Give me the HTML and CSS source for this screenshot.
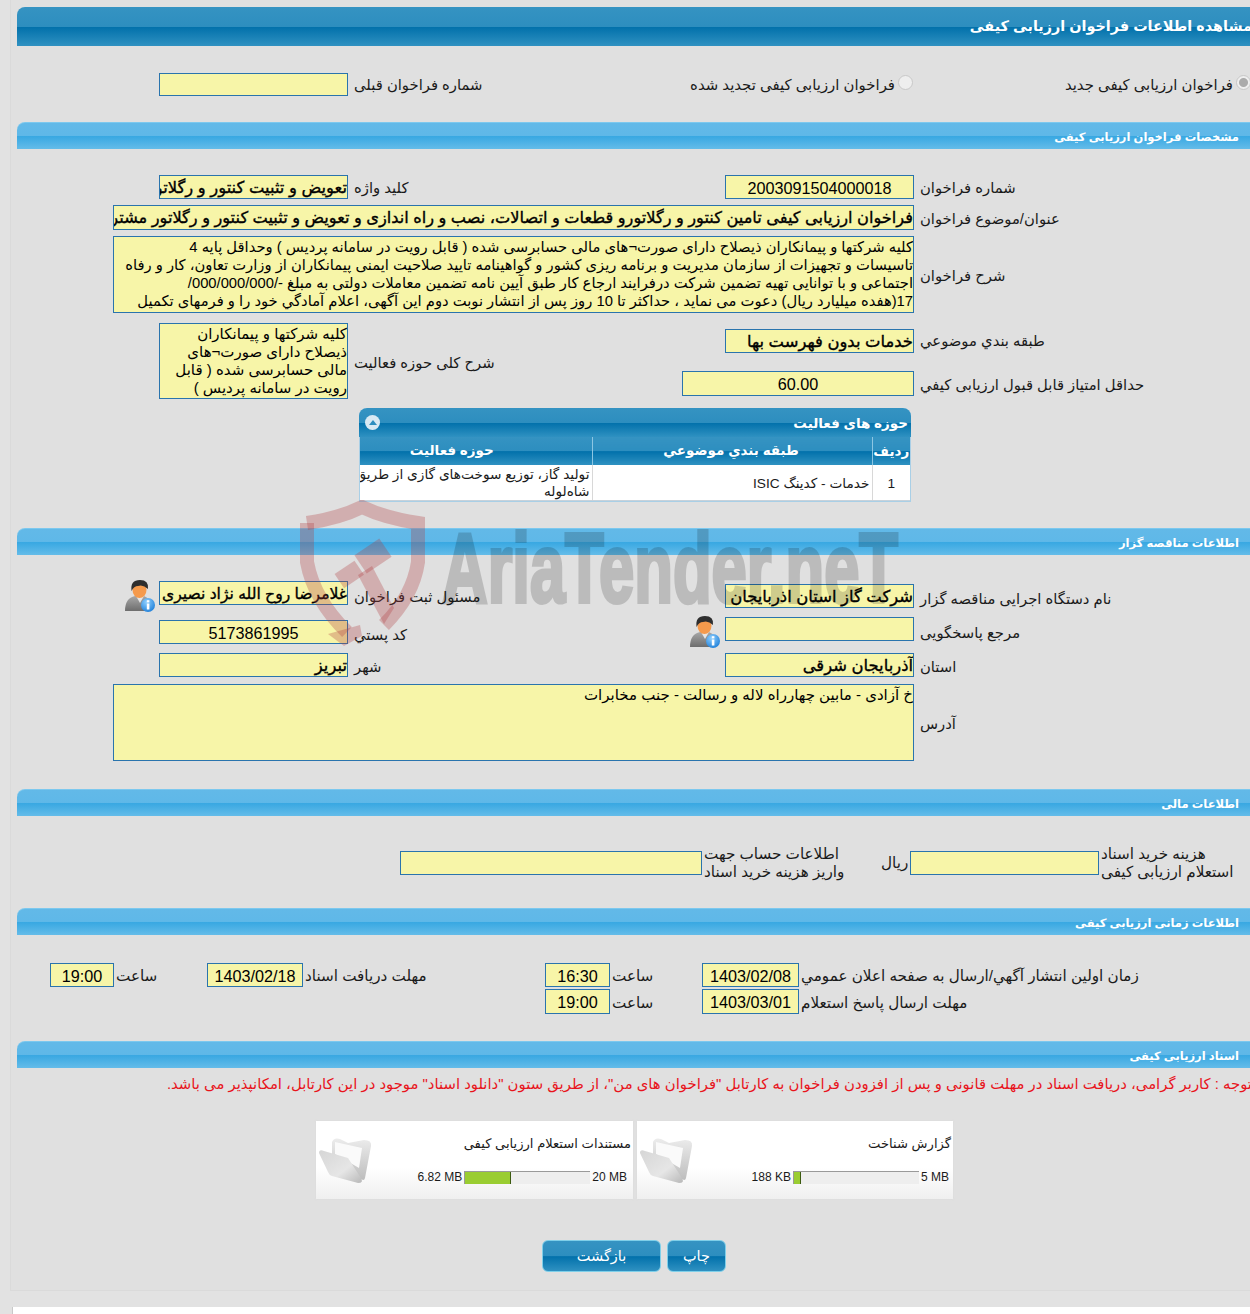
FILE: index.html
```html
<!DOCTYPE html>
<html lang="fa">
<head>
<meta charset="utf-8">
<title>مشاهده اطلاعات فراخوان ارزیابی کیفی</title>
<link rel="stylesheet" href="styles.css">
</head>
<body>
<div class="panel">
<main class="page">
  <h1 class="title-bar">مشاهده اطلاعات فراخوان ارزیابی کیفی</h1>

  <div class="radio-row">
    <div class="val prev-input"></div>
    <div class="lab prev-label">شماره فراخوان قبلی</div>
    <label class="opt opt-second"><span class="radio"></span>فراخوان ارزیابی کیفی تجدید شده</label>
    <label class="opt opt-first"><span class="radio radio-on"></span>فراخوان ارزیابی کیفی جدید</label>
  </div>

  <h2 class="bar bar-spec">مشخصات فراخوان ارزیابی کیفی</h2>
  <div class="form form-spec">
    <div class="val c-lv strong">تعویض و تثبیت کنتور و رگلاتور</div>
    <div class="lab c-ll">کلید واژه</div>
    <div class="val c-rv num">2003091504000018</div>
    <div class="lab c-rl">شماره فراخوان</div>

    <div class="val c-wide strong subject">فراخوان ارزیابی کیفی تامین کنتور و رگلاتورو قطعات و اتصالات، نصب و راه اندازی و تعویض و تثبیت کنتور و رگلاتور مشترکین</div>
    <div class="lab c-rl">عنوان/موضوع فراخوان</div>

    <div class="val c-wide multi multi-main">کلیه شرکتها و پیمانکاران ذیصلاح دارای صورت¬های مالی حسابرسی شده ( قابل رویت در سامانه پردیس ) وحداقل پایه 4<br>تاسیسات و تجهیزات از سازمان مدیریت و برنامه ریزی کشور و گواهینامه تایید صلاحیت ایمنی پیمانکاران از وزارت تعاون، کار و رفاه<br>اجتماعی و با توانایی تهیه تضمین شرکت درفرایند ارجاع کار طبق آیین نامه تضمین معاملات دولتی به مبلغ -/000/000/000/<br>17(هفده میلیارد ریال) دعوت می نماید ، حداکثر تا 10 روز پس از انتشار نوبت دوم این آگهی، اعلام آمادگي خود را و فرمهای تکمیل</div>
    <div class="lab c-rl">شرح فراخوان</div>

    <div class="val c-lv multi scope-box">کلیه شرکتها و پیمانکاران<br>ذیصلاح دارای صورت¬های<br>مالی حسابرسی شده ( قابل<br>رویت در سامانه پردیس )</div>
    <div class="lab c-ll scope-label">شرح کلی حوزه فعالیت</div>
    <div class="val c-rv strong class-box">خدمات بدون فهرست بها</div>
    <div class="lab c-rl class-label">طبقه بندي موضوعي</div>

    <div class="val c-score num">60.00</div>
    <div class="lab c-rl">حداقل امتیاز قابل قبول ارزیابی کیفي</div>
  </div>

  <section class="activity">
    <div class="activity-head">
      <span class="toggle"><span class="toggle-arrow"></span></span>
      <span class="activity-title">حوزه های فعالیت</span>
    </div>
    <table class="activity-table">
      <thead>
        <tr><th class="col-a">ردیف</th><th class="col-b">طبقه بندي موضوعي</th><th class="col-c">حوزه فعالیت</th></tr>
      </thead>
      <tbody>
        <tr><td class="cell-n">1</td><td>خدمات - کدینگ ISIC</td><td class="cell-c">تولید گاز، توزیع سوخت‌های گازی از طریق<br>شاه‌لوله</td></tr>
      </tbody>
    </table>
  </section>

  <h2 class="bar bar-org">اطلاعات مناقصه گزار</h2>
  <div class="form form-org">
    <svg class="person c-li" viewBox="0 0 32 32"><use href="#person-icon"/></svg>
    <div class="val c-lv strong name-fit">غلامرضا روح الله نژاد نصیری</div>
    <div class="lab c-ll">مسئول ثبت فراخوان</div>
    <div class="val c-rv strong org-r">شرکت گاز استان اذربایجان</div>
    <div class="lab c-rl org-r-label">نام دستگاه اجرایی مناقصه گزار</div>

    <div class="val c-lv num org-l">5173861995</div>
    <div class="lab c-ll org-l-label">کد پستي</div>
    <svg class="person c-ri" viewBox="0 0 32 32"><use href="#person-icon"/></svg>
    <div class="val c-rv"></div>
    <div class="lab c-rl">مرجع پاسخگویی</div>

    <div class="val c-lv strong">تبریز</div>
    <div class="lab c-ll">شهر</div>
    <div class="val c-rv strong">آذربایجان شرقی</div>
    <div class="lab c-rl">استان</div>

    <div class="val c-wide multi">خ آزادی - مابین چهارراه لاله و رسالت - جنب مخابرات</div>
    <div class="lab c-rl">آدرس</div>
  </div>

  <h2 class="bar bar-fin">اطلاعات مالی</h2>
  <div class="fin-row">
    <div class="val fin-account"></div>
    <div class="lab fin-account-label">اطلاعات حساب جهت<br>واریز هزینه خرید اسناد</div>
    <div class="lab fin-unit">ریال</div>
    <div class="val fin-cost"></div>
    <div class="lab fin-cost-label">هزینه خرید اسناد<br>استعلام ارزیابی کیفی</div>
  </div>

  <h2 class="bar bar-time">اطلاعات زمانی ارزیابی کیفی</h2>
  <div class="time-grid">
    <div class="val num t1">19:00</div>
    <div class="lab t-l t1l">ساعت</div>
    <div class="val num t2">1403/02/18</div>
    <div class="lab t-l t2l">مهلت دریافت اسناد</div>
    <div class="val num t3">16:30</div>
    <div class="lab t-l t3l">ساعت</div>
    <div class="val num t4">1403/02/08</div>
    <div class="lab t-l t4l">زمان اولین انتشار آگهي/ارسال به صفحه اعلان عمومي</div>
    <div class="val num t3 r2">19:00</div>
    <div class="lab t-l t3l r2">ساعت</div>
    <div class="val num t4 r2">1403/03/01</div>
    <div class="lab t-l t4l r2">مهلت ارسال پاسخ استعلام</div>
  </div>

  <h2 class="bar bar-docs">اسناد ارزیابی کیفی</h2>
  <p class="notice">توجه : کاربر گرامی، دریافت اسناد در مهلت قانونی و پس از افزودن فراخوان به کارتابل "فراخوان های من"، از طریق ستون "دانلود اسناد" موجود در این کارتابل، امکانپذیر می باشد.</p>

  <div class="cards">
    <article class="card">
      <svg class="folder" viewBox="0 0 56 50"><use href="#folder-icon"/></svg>
      <div class="card-main">
        <div class="card-title">مستندات استعلام ارزیابی کیفی</div>
        <div class="meter">
          <span class="meter-text">6.82 MB</span>
          <span class="meter-track"><span class="meter-fill" style="width:36%"></span></span>
          <span class="meter-text">20 MB</span>
        </div>
      </div>
    </article>
    <article class="card">
      <svg class="folder" viewBox="0 0 56 50"><use href="#folder-icon"/></svg>
      <div class="card-main">
        <div class="card-title">گزارش شناخت</div>
        <div class="meter">
          <span class="meter-text">188 KB</span>
          <span class="meter-track"><span class="meter-fill" style="width:5%"></span></span>
          <span class="meter-text">5 MB</span>
        </div>
      </div>
    </article>
  </div>

  <div class="actions">
    <button class="btn btn-back" type="button">بازگشت</button>
    <button class="btn btn-print" type="button">چاپ</button>
  </div>
</main>
</div>
<div class="foot-strip"></div>

<svg class="watermark" viewBox="0 0 610 150" aria-hidden="true">
  <g fill="none" stroke="#b03a3f" stroke-opacity=".3" stroke-width="14">
    <path d="M7 23 Q40 18 62 7 Q85 18 118 23 L118 62 Q113 96 84 125"/>
    <path d="M7 23 L7 62 Q14 100 47 132"/>
  </g>
  <g fill="#b03a3f" fill-opacity=".3">
    <rect x="37" y="66" width="24" height="17" transform="rotate(-34 49 74)"/>
    <rect x="58" y="45" width="30" height="22" transform="rotate(-34 73 56)"/>
    <path d="M58 75 L72 66 L94 108 L84 124 Z"/>
    <path d="M28 134 L60 125 L62 136 L44 146 Z"/>
  </g>
  <text class="wm-text" x="142" y="102" textLength="456" lengthAdjust="spacingAndGlyphs">AriaTender.neT</text>
</svg>

<svg class="defs" width="0" height="0" aria-hidden="true">
  <defs>
    <linearGradient id="fold-back" x1="0" y1="0" x2="0" y2="1"><stop offset="0" stop-color="#ececec"/><stop offset="1" stop-color="#bdbdbd"/></linearGradient>
    <linearGradient id="fold-front" x1="0" y1="0" x2="1" y2="1"><stop offset="0" stop-color="#d6d6d6"/><stop offset=".6" stop-color="#e6e6e6"/><stop offset="1" stop-color="#b8b8b8"/></linearGradient>
    <linearGradient id="suit" x1="0" y1="0" x2="0" y2="1"><stop offset="0" stop-color="#a8a8a8"/><stop offset="1" stop-color="#6d6d6d"/></linearGradient>
    <radialGradient id="info" cx=".4" cy=".3" r=".8"><stop offset="0" stop-color="#8fd0ff"/><stop offset="1" stop-color="#1679d6"/></radialGradient>
    <symbol id="folder-icon" viewBox="0 0 56 50">
      <path d="M14 8 Q16 3 22 5 L30 9 L46 6 Q54 6 53 12 L47 44 Q46 48 42 44 L14 25 Z" fill="url(#fold-back)"/>
      <path d="M17 8 L44 14 L41 34 L17 20 Z" fill="#fafafa"/>
      <path d="M1 19 Q1 15 6 17 L30 24 L43 44 Q46 49 40 49 L14 42 Q11 41 10 38 Z" fill="url(#fold-front)"/>
    </symbol>
    <symbol id="person-icon" viewBox="0 0 32 32">
      <path d="M1 31 Q1 18 11 16 L20 16 Q27 18 27 31 Z" fill="url(#suit)"/>
      <path d="M12 16 L16 23 L20 16 Z" fill="#e6e6e6"/>
      <ellipse cx="15.5" cy="10" rx="7" ry="8" fill="#f59a4c"/>
      <path d="M7.5 11 Q6 0 16 0 Q25 0 24 9 Q19 4 14 6 Q10 6 7.5 11 Z" fill="#2e2e2e"/>
      <circle cx="24" cy="25" r="7" fill="url(#info)"/>
      <rect x="22.8" y="23.5" width="2.6" height="6" fill="#fff"/>
      <rect x="22.8" y="20.2" width="2.6" height="2.2" fill="#fff"/>
    </symbol>
  </defs>
</svg>
</body>
</html>
```
FILE: styles.css
```css
html { overflow: hidden; background: #e2e2e2; }
body {
  margin: 0;
  width: 1250px;
  height: 1314px;
  overflow: hidden;
  position: relative;
  background: #e2e2e2;
  color: #1a1a1a;
  font-family: "Liberation Sans", "DejaVu Sans", sans-serif;
  font-size: 13px;
}
.panel {
  margin-left: 10px;
  height: 1291px;
  box-sizing: border-box;
  padding: 7px 0 0 7px;
  background: #e0e0e0;
  border-left: 1px solid #dadada;
  border-bottom: 1px solid #dadada;
}
.page { width: 1241px; margin-left: -1px; }
.foot-strip {
  margin: 16px 0 0 12px;
  height: 7px;
  background: #fff;
  border-left: 1px solid #c8c8c8;
}

.title-bar {
  margin: 0;
  height: 39px;
  box-sizing: border-box;
  padding: 0 6px;
  border-radius: 8px 8px 0 0;
  background: linear-gradient(#3593c2 0, #2d8ebf 50%, #0271ab 52%, #2f91c1 100%);
  color: #fff;
  direction: rtl;
  font-size: 14.4px;
  font-weight: bold;
  line-height: 38px;
  white-space: nowrap;
}
.bar {
  margin: 0;
  height: 27px;
  box-sizing: border-box;
  padding: 0 19px;
  border-top: 1px solid #7cc8ee;
  border-radius: 8px 8px 0 0;
  background: linear-gradient(#62b9e8 0, #5fb8e8 48%, #39a8e2 52%, #64bce9 100%);
  color: #fff;
  direction: rtl;
  font-size: 11.5px;
  font-weight: bold;
  line-height: 28px;
  white-space: nowrap;
}
.bar-spec { margin-top: 26px; }
.bar-org { margin-top: 26px; }
.bar-fin { margin-top: 28px; }
.bar-time { margin-top: 27px; }
.bar-docs { margin-top: 27px; }

.val {
  box-sizing: border-box;
  border: 1px solid #2a74ad;
  background: #f7f5a8;
  color: #000;
  direction: rtl;
  overflow: hidden;
  white-space: nowrap;
  font-size: 15px;
  line-height: 23px;
  height: 24px;
}
.strong { font-size: 16.4px; -webkit-text-stroke: .35px #000; }
.subject { font-size: 16.2px; }
.name-fit { font-size: 15.6px; padding-right: 0; }
.num { text-align: center; font-size: 16.2px; line-height: 24px; }
.multi { font-size: 15px; line-height: 18px; white-space: nowrap; padding-top: 1px; }
.multi-main { font-size: 14.75px; }
.lab {
  font-size: 14.8px;
  line-height: 18px;
  direction: rtl;
  text-align: left;
  white-space: nowrap;
  align-self: center;
  padding-left: 6px;
  padding-top: 2px;
}

.radio-row {
  display: flex;
  margin: 27px 0 0 142px;
  height: 23px;
  align-items: center;
}
.prev-input { width: 189px; height: 23px; }
.prev-label { width: 334px; box-sizing: border-box; padding-top: 0; }
.opt {
  direction: rtl;
  display: flex;
  align-items: center;
  gap: 3px;
  white-space: nowrap;
  font-size: 14.9px;
  box-sizing: border-box;
}
.opt-second { width: 231px; }
.opt-first { width: 338px; }
.radio {
  width: 13px;
  height: 13px;
  margin-top: -5px;
  border-radius: 50%;
  border: 1px solid #c8c8c8;
  background: #eeeeee;
  flex: none;
}
.radio-on { background: radial-gradient(circle, #ababab 0 4px, #eeeeee 5px); }

.form {
  display: grid;
  grid-template-columns: 96px 46px 189px 334px 43px 189px 336px;
  column-gap: 0;
  row-gap: 6px;
}
.form-spec {
  margin-top: 26px;
  grid-template-rows: 24px 25px 77px 46px 25px;
}
.form-org {
  margin-top: 26px;
  grid-template-rows: 30px 30px 25px 77px;
}
.c-li { grid-column: 2; }
.c-lv { grid-column: 3; }
.c-ll { grid-column: 4; }
.c-ri { grid-column: 5; }
.c-rv { grid-column: 6; }
.c-rl { grid-column: 7; }
.c-wide { grid-column: 2 / 7; height: auto; }
.c-score { grid-column: 5 / 7; height: 25px; margin-left: 0; }
.form-spec .c-lv:first-child { grid-row: 1; }
.form-spec .c-wide { text-align: right; }
.scope-box { grid-row: 4 / 6; height: 76px; margin-top: 4px; align-self: start; }
.scope-label { grid-row: 4 / 6; margin-top: 8px; }
.class-box { grid-row: 4; margin-top: 10px; }
.class-label { grid-row: 4; align-self: start; margin-top: 11px; }
.c-score, .c-score + .c-rl { grid-row: 5; }

.activity {
  width: 552px;
  margin: 12px 0 0 342px;
  box-sizing: border-box;
  border: 1px solid #a9cfe6;
  border-top: 0;
  border-radius: 8px 8px 0 0;
  background: #fff;
}
.activity-head {
  display: flex;
  justify-content: space-between;
  align-items: center;
  height: 29px;
  padding: 0 3px 0 6px;
  margin: 0 -1px;
  border-radius: 8px 8px 0 0;
  background: linear-gradient(#3593c2 0, #2d8ebf 50%, #0271ab 52%, #2f91c1 100%);
}
.activity-title { color: #fff; font-weight: bold; font-size: 13.5px; direction: rtl; }
.toggle {
  width: 15px;
  height: 15px;
  border-radius: 50%;
  background: #d8e9f3;
  display: flex;
  align-items: center;
  justify-content: center;
}
.toggle-arrow {
  width: 0;
  height: 0;
  border: 4px solid transparent;
  border-top: 0;
  border-bottom: 5px solid #2d8ebf;
}
.activity-table {
  width: 100%;
  table-layout: fixed;
  border-collapse: collapse;
  direction: rtl;
}
.activity-table th {
  height: 28px;
  padding: 0 0 3px;
  box-sizing: border-box;
  color: #fff;
  font-size: 13.5px;
  font-weight: bold;
  background: linear-gradient(#3593c2 0, #2d8ebf 50%, #0271ab 52%, #2f91c1 100%);
  border-left: 1px solid #8cc6e3;
}
.activity-table th:last-child { border-left: 0; }
.activity-table .col-a { width: 38px; padding: 0; }
.activity-table .col-b { width: 280px; padding-right: 2px; }
.activity-table .col-c { padding-right: 48px; }
.activity-table td {
  height: 35px;
  padding: 2px 2px 0;
  box-sizing: border-box;
  border-left: 1px solid #d8d8d8;
  border-bottom: 1px solid #c8d2da;
  font-size: 13.7px;
  line-height: 17px;
  text-align: right;
  vertical-align: middle;
  white-space: nowrap;
  overflow: hidden;
}
.activity-table td:last-child { border-left: 0; }
.activity-table .cell-n { text-align: center; }
.activity-table .cell-c { padding: 1px 2px 0 0; }

.person { width: 32px; height: 32px; justify-self: center; align-self: start; }
.form-org .c-li { margin: -1px 0 0 8px; }
.form-org .c-ri { margin: -1px 0 0 2px; }
.org-r { margin-top: 3px; }
.org-r-label { margin-top: 3px; }
.org-l { margin-top: 3px; }
.org-l-label { margin-top: 3px; }

.fin-row {
  display: flex;
  align-items: center;
  height: 36px;
  margin: 29px 0 0 383px;
}
.fin-row .lab { font-size: 15.2px; }
.fin-account { width: 302px; }
.fin-account-label { width: 179px; box-sizing: border-box; padding: 0 0 0 2px; }
.fin-unit { width: 29px; box-sizing: border-box; padding: 0; }
.fin-cost { width: 189px; }
.fin-cost-label { padding: 0 0 0 2px; }

.time-grid {
  display: grid;
  grid-template-columns: 33px 64px 93px 96px 242px 65px 92px 97px 1fr;
  grid-template-rows: 24px 25px;
  row-gap: 2px;
  margin-top: 28px;
}
.time-grid .val { height: 100%; }
.t-l { padding-left: 2px; font-size: 15.2px; }
.t1 { grid-column: 2; }
.t1l { grid-column: 3; }
.t2 { grid-column: 4; }
.t2l { grid-column: 5; }
.t3 { grid-column: 6; }
.t3l { grid-column: 7; }
.t4 { grid-column: 8; }
.t4l { grid-column: 9; }
.r2 { grid-row: 2; }

.notice {
  margin: 7px 0 0;
  padding-right: 6px;
  color: #e8141c;
  direction: rtl;
  font-size: 14.85px;
  line-height: 18px;
  white-space: nowrap;
}

.cards {
  display: flex;
  gap: 4px;
  margin: 28px 0 0 299px;
}
.card {
  width: 317px;
  height: 78px;
  box-sizing: border-box;
  padding: 0 2px;
  display: flex;
  background: linear-gradient(#fff 60%, #efefef 100%);
  box-shadow: 0 0 2px #d8d8d8;
}
.card + .card { width: 316px; }
.folder { width: 56px; height: 50px; flex: none; margin-top: 13px; }
.card-main { flex: 1; min-width: 0; }
.card-title {
  margin-top: 14px;
  direction: rtl;
  font-size: 13.1px;
  line-height: 17px;
  white-space: nowrap;
}
.meter {
  display: flex;
  justify-content: flex-end;
  align-items: center;
  gap: 2px;
  margin-top: 18px;
  padding-right: 4px;
  height: 14px;
}
.card + .card .meter { padding-right: 2px; }
.meter-text { font-size: 12px; white-space: nowrap; }
.meter-track {
  display: block;
  width: 126px;
  height: 13px;
  box-sizing: border-box;
  background: #eeeeee;
  border-top: 1px solid #9a9a9a;
  border-left: 1px solid #9a9a9a;
}
.meter-fill {
  display: block;
  height: 100%;
  background: #9acd32;
  border-right: 1px solid #3c5a10;
}

.actions {
  display: flex;
  gap: 6px;
  margin: 41px 0 0 525px;
}
.btn {
  height: 32px;
  padding: 0;
  border: 1px solid #7fcfe9;
  border-radius: 6px;
  background: linear-gradient(#3593c2 0, #2d8ebf 50%, #0271ab 52%, #2f91c1 100%);
  color: #fff;
  direction: rtl;
  font-family: inherit;
  font-size: 14.5px;
}
.btn-back { width: 119px; }
.btn-print { width: 59px; }

.watermark {
  position: absolute;
  left: 300px;
  top: 500px;
  width: 610px;
  height: 150px;
  pointer-events: none;
}
.wm-text {
  font-family: "Liberation Sans Narrow", "Liberation Sans", sans-serif;
  font-weight: bold;
  font-size: 98px;
  fill: #000;
  stroke: #000;
  stroke-width: 4px;
  opacity: .16;
}
.defs { position: absolute; }
```
